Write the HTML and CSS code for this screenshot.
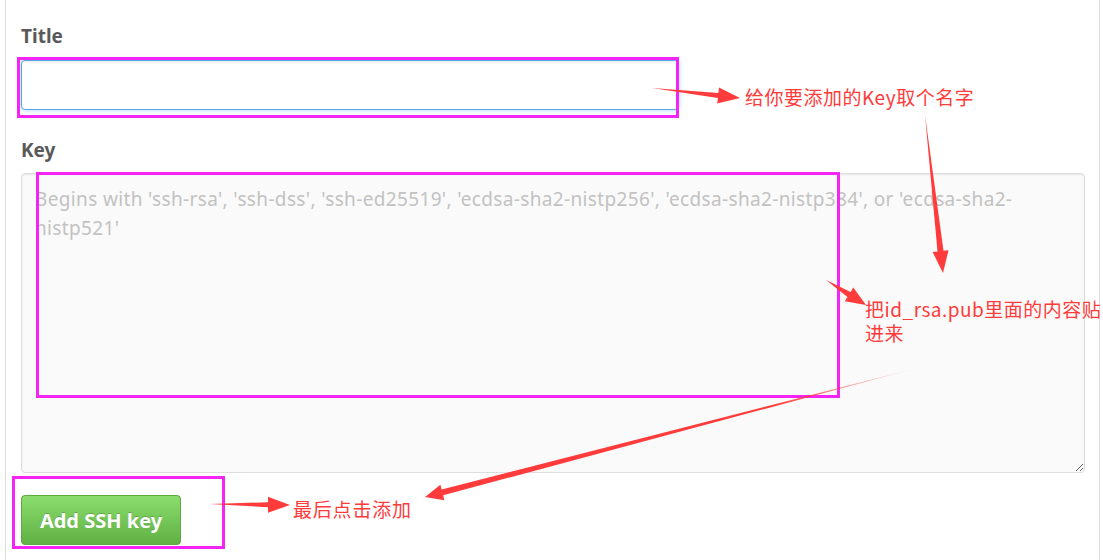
FILE: index.html
```html
<!DOCTYPE html>
<html lang="zh-CN">
<head>
<meta charset="utf-8">
<title>Add SSH key</title>
<link rel="stylesheet" href="styles.css">
</head>
<body>
<div class="page">
  <form class="form">
    <label class="label" for="title">Title</label>
    <input class="input" id="title" type="text">
    <label class="label key-label" for="key">Key</label>
    <textarea class="textarea" id="key" placeholder="Begins with 'ssh-rsa', 'ssh-dss', 'ssh-ed25519', 'ecdsa-sha2-nistp256', 'ecdsa-sha2-nistp384', or 'ecdsa-sha2-nistp521'"></textarea>
    <button class="btn" type="button">Add SSH key</button>
  </form>

  <svg class="overlay" width="1103" height="560" viewBox="0 0 1103 560" aria-hidden="true">
    <defs>
      <linearGradient id="fade" gradientUnits="userSpaceOnUse" x1="917" y1="368" x2="425" y2="497">
        <stop offset="0" stop-color="#ff3b3b" stop-opacity="0.1"/>
        <stop offset="0.3" stop-color="#ff3b3b" stop-opacity="1"/>
        <stop offset="1" stop-color="#ff3b3b"/>
      </linearGradient>
    </defs>
    <g fill="none" stroke="#f425f4" stroke-width="3">
      <rect x="18.5" y="58.5" width="659" height="58"/>
      <rect x="37.5" y="173.5" width="801" height="223"/>
      <rect x="13.5" y="477.5" width="210" height="70"/>
    </g>
    <g fill="#ff3b3b">
      <polygon points="652,88 717.9,98 717.2,103.5 740,98 719,87.6 718.4,93"/>
      <polygon points="925,115 937.5,251.5 932.6,252 943,273 948.5,250.2 943.5,250.8"/>
      <polygon points="826,280 847.5,296.9 844.8,301.2 866,305 853.3,287.6 850.6,291.9"/>
      <polygon points="210,504 268,507.2 268,512.7 290,505 268,496.7 268,502.2"/>
    </g>
    <polygon fill="url(#fade)" points="917,368 441.6,489.5 440.4,484.7 425,497 444.4,500.2 443.2,495.3"/>
  </svg>

  <p class="note note-title">给你要添加的Key取个名字</p>
  <div class="note note-key">
    <p class="note-line">把id_rsa.pub里面的内容贴</p>
    <p class="note-line">进来</p>
  </div>
  <p class="note note-btn">最后点击添加</p>
</div>
</body>
</html>
```

FILE: styles.css
```css
* {
  box-sizing: border-box;
}

html,
body {
  margin: 0;
  padding: 0;
  background: #ffffff;
}

.page {
  position: relative;
  width: 1103px;
  height: 560px;
  overflow: hidden;
  font-family: "Noto Sans", "Noto Sans CJK SC", sans-serif;
}

.form {
  display: flex;
  flex-direction: column;
  align-items: flex-start;
  margin: 0 3px 0 5px;
  height: 560px;
  padding: 24px 14px 0 15px;
  border-left: 1px solid #dddddd;
  border-right: 1px solid #dddddd;
}

.label {
  display: block;
  font-size: 19px;
  line-height: 24px;
  font-weight: 700;
  color: #595959;
  margin-bottom: 12px;
}

.key-label {
  margin-top: 28px;
  margin-bottom: 11px;
}

.input {
  display: block;
  width: 658px;
  height: 50px;
  margin: 0;
  padding: 6px 10px;
  font-size: 16px;
  font-family: inherit;
  background: #ffffff;
  border: 1px solid #51a7e8;
  border-radius: 4px;
  outline: none;
  box-shadow: inset 0 1px 2px rgba(0, 0, 0, 0.075), 0 0 5px rgba(81, 167, 232, 0.5);
}

.textarea {
  display: block;
  width: 1064px;
  height: 300px;
  margin: 0;
  padding: 11px 13px;
  font-family: inherit;
  font-size: 19px;
  line-height: 29px;
  letter-spacing: 0.35px;
  color: #333333;
  background: #fafafa;
  border: 1px solid #dddddd;
  border-radius: 4px;
  box-shadow: inset 0 1px 2px rgba(0, 0, 0, 0.075);
  resize: vertical;
  outline: none;
}

.textarea::placeholder {
  color: #c2c2c2;
}

.btn {
  display: block;
  width: 160px;
  height: 50px;
  margin-top: 22px;
  padding: 0;
  font-family: inherit;
  font-size: 20px;
  font-weight: 700;
  color: #ffffff;
  text-shadow: 0 -1px 0 rgba(0, 0, 0, 0.2);
  background-color: #60b044;
  background-image: linear-gradient(#8add6d, #60b044);
  border: 1px solid #5ca941;
  border-radius: 4px;
  cursor: pointer;
}

.overlay {
  position: absolute;
  left: 0;
  top: 0;
  pointer-events: none;
}

.note {
  position: absolute;
  margin: 0;
  font-family: "Noto Sans CJK SC", "Noto Sans", sans-serif;
  font-size: 19px;
  line-height: 24px;
  color: #ff3b3b;
  white-space: nowrap;
  letter-spacing: 0.5px;
}

.note-line {
  margin: 0;
  height: 24px;
}

.note-title {
  left: 745px;
  top: 85px;
}

.note-key {
  left: 865px;
  top: 297px;
}

.note-btn {
  left: 293px;
  top: 497px;
  letter-spacing: 0.8px;
}
```
